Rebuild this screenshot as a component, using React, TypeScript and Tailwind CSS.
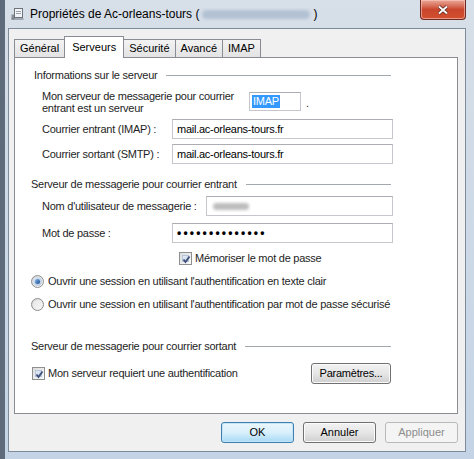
import React from "react";

const font = { fontFamily: '"Liberation Sans", Arial, sans-serif' };

function Check() {
  return (
    <div className="w-[13px] h-[13px] border border-[#8e8f8f] bg-gradient-to-br from-[#dcdcdc] to-[#fbfbfb] p-[2px] shrink-0">
      <div className="w-full h-full bg-gradient-to-br from-[#e6eef8] to-[#c5d4e6] border border-[#b5c4d6] relative">
        <svg width="11" height="11" viewBox="0 0 11 11" className="absolute left-[-2px] top-[-2px]">
          <path d="M2.5 5.5 L4.5 8 L8.5 2.5" stroke="#3d4f7a" strokeWidth="1.8" fill="none" />
        </svg>
      </div>
    </div>
  );
}

function Radio({ on }: { on?: boolean }) {
  return (
    <div className="w-[13px] h-[13px] rounded-full border border-[#8e8f8f] bg-gradient-to-br from-[#d4d4d4] to-[#f8f8f8] flex items-center justify-center shrink-0">
      <div className={"w-[9px] h-[9px] rounded-full flex items-center justify-center " + (on ? "bg-gradient-to-br from-[#d9e6f5] to-[#b5c8df]" : "bg-gradient-to-br from-[#e6e6e6] to-[#f6f6f6]")}>
        {on && <div className="w-[5px] h-[5px] rounded-full bg-gradient-to-br from-[#7fb4e8] to-[#1d4f94]" />}
      </div>
    </div>
  );
}

function Field({ w, children }: { w: string; children?: React.ReactNode }) {
  return (
    <div className={"h-[20px] border border-[#c5c7cc] border-t-[#abadb3] bg-white flex items-center pl-[4px] text-[11px] text-black " + w}>
      {children}
    </div>
  );
}

function Header({ text, pl }: { text: string; pl: string }) {
  return (
    <div className={"h-[14px] flex items-center text-[11px] text-[#1e1e1e] " + pl}>
      <span>{text}</span>
      <div className="flex-1 h-px bg-[#a3a8ad] ml-[9px] mr-[66px]" />
    </div>
  );
}

function Btn({ children, kind }: { children: React.ReactNode; kind?: "default" | "disabled" }) {
  const base = "h-[21px] w-[73px] rounded-[3px] flex items-center justify-center text-[11px] ";
  if (kind === "disabled")
    return <div className={base + "border border-[#b7babd] bg-[#f4f4f4] text-[#8d8d8d]"}>{children}</div>;
  if (kind === "default")
    return (
      <div className={base + "border border-[#3c7fb1] bg-gradient-to-b from-[#eaf6fd] via-[#d9f0fc] to-[#a7d9f5] text-black shadow-[inset_0_0_0_1px_#c6e4f5]"}>
        {children}
      </div>
    );
  return (
    <div className={base + "border border-[#707070] bg-gradient-to-b from-[#f2f2f2] via-[#e6e6e6] to-[#cfcfcf] text-black shadow-[inset_0_0_0_1px_#fbfbfb]"}>
      {children}
    </div>
  );
}

export default function App() {
  return (
    <div
      style={font}
      className="w-[474px] h-[459px] overflow-hidden flex flex-col bg-gradient-to-r from-[#5d6a7a] via-[#c3cfdc] to-[#b8cde4] relative"
    >
      <div className="absolute inset-0 bg-gradient-to-b from-[#d7dfe8] via-[#cdd9e6] to-[#c4d4e6] left-[5px] right-0" />
      {/* title bar */}
      <div className="relative h-[28px] flex items-center pl-[11px] shrink-0">
        <svg width="13" height="12" viewBox="0 0 13 12" className="mr-[6px]">
          <rect x="0.5" y="6.5" width="3" height="5" fill="#8a8f96" />
          <rect x="3.5" y="0.5" width="8" height="9" fill="#f2f4f6" stroke="#6d747c" />
          <rect x="5" y="3" width="5" height="1" fill="#9aa3ad" />
          <rect x="5" y="5" width="5" height="1" fill="#9aa3ad" />
          <rect x="0.5" y="10.5" width="12" height="1" fill="#6d747c" />
        </svg>
        <span className="text-[12px] text-black">Propriétés de Ac-orleans-tours (</span>
        <span className="w-[108px] h-[9px] mx-[3px] rounded-full bg-[#b3c2d3] blur-[1.5px]" />
        <span className="text-[12px] text-black">)</span>
        <div className="absolute right-[8px] top-0 w-[46px] h-[20px] rounded-b-[4px] border border-t-0 border-[#6b2a22] bg-gradient-to-b from-[#e9a99b] via-[#c9462c] to-[#d2502f] flex items-center justify-center shadow-[inset_0_0_0_1px_rgba(255,200,190,0.6)]">
          <svg width="12" height="10" viewBox="0 0 12 10">
            <path d="M2 1.5 L10 8.5 M10 1.5 L2 8.5" stroke="#4a1a14" strokeWidth="3.2" />
            <path d="M2 1.5 L10 8.5 M10 1.5 L2 8.5" stroke="#ffffff" strokeWidth="2" />
          </svg>
        </div>
      </div>

      {/* client */}
      <div className="relative ml-[8px] mr-[8px] h-[424px] border border-[#7d8b9a] bg-[#f0f0f0] flex flex-col pl-[5px] pr-[7px] shrink-0">
        {/* tabs */}
        <div className="flex items-end h-[28px] pt-[6px] text-[11px] text-black">
          <div className="h-[18px] px-[5px] border border-[#898c95] border-b-0 bg-gradient-to-b from-[#f3f3f3] to-[#e3e3e3] flex items-center">Général</div>
          <div className="h-[22px] px-[7px] border border-[#898c95] border-b-0 bg-white flex items-start pt-[2px] -mb-px relative z-10 -ml-px">Serveurs</div>
          <div className="h-[18px] px-[5px] border border-[#898c95] border-b-0 border-l-0 bg-gradient-to-b from-[#f3f3f3] to-[#e3e3e3] flex items-center">Sécurité</div>
          <div className="h-[18px] px-[5px] border border-[#898c95] border-b-0 border-l-0 bg-gradient-to-b from-[#f3f3f3] to-[#e3e3e3] flex items-center">Avancé</div>
          <div className="h-[18px] px-[5px] border border-[#898c95] border-b-0 border-l-0 bg-gradient-to-b from-[#f3f3f3] to-[#e3e3e3] flex items-center">IMAP</div>
        </div>
        {/* panel */}
        <div className="h-[357px] border border-[#898c95] bg-white flex flex-col text-[11px] text-[#1e1e1e] tracking-[-0.25px]">
          <div className="mt-[10px]">
            <Header text="Informations sur le serveur" pl="pl-[19px]" />
          </div>
          <div className="mt-[8px] flex items-start pl-[27px]">
            <div className="w-[207px] leading-[12px]">
              Mon serveur de messagerie pour courrier
              <br />
              entrant est un serveur
            </div>
            <div className="mt-[2px] h-[19px] w-[52px] border border-[#c5c7cc] border-t-[#abadb3] flex items-center pl-[2px]">
              <span className="bg-[#3399ff] text-white px-px leading-[13px]">IMAP</span>
            </div>
            <span className="ml-[5px] mt-[5px]">.</span>
          </div>
          <div className="mt-[5px] flex items-center pl-[27px]">
            <div className="w-[130px]">Courrier entrant (IMAP) :</div>
            <Field w="w-[221px]">mail.ac-orleans-tours.fr</Field>
          </div>
          <div className="mt-[5px] flex items-center pl-[27px]">
            <div className="w-[130px]">Courrier sortant (SMTP) :</div>
            <Field w="w-[221px]">mail.ac-orleans-tours.fr</Field>
          </div>
          <div className="mt-[13px]">
            <Header text="Serveur de messagerie pour courrier entrant" pl="pl-[16px]" />
          </div>
          <div className="mt-[5px] flex items-center pl-[27px]">
            <div className="w-[164px]">Nom d'utilisateur de messagerie :</div>
            <Field w="w-[187px]">
              <span className="w-[36px] h-[7px] ml-[2px] rounded-full bg-[#bdbdbd] blur-[1.5px]" />
            </Field>
          </div>
          <div className="mt-[7px] flex items-center pl-[27px]">
            <div className="w-[130px]">Mot de passe :</div>
            <Field w="w-[221px]">
              <span className="text-[12px] tracking-[2.2px] font-bold">••••••••••••••</span>
            </Field>
          </div>
          <div className="mt-[8px] h-[14px] flex items-center pl-[164px] gap-[3px]">
            <Check />
            <span>Mémoriser le mot de passe</span>
          </div>
          <div className="mt-[9px] h-[14px] flex items-center pl-[16px] gap-[4px]">
            <Radio on />
            <span>Ouvrir une session en utilisant l'authentification en texte clair</span>
          </div>
          <div className="mt-[9px] h-[14px] flex items-center pl-[16px] gap-[4px]">
            <Radio />
            <span>Ouvrir une session en utilisant l'authentification par mot de passe sécurisé</span>
          </div>
          <div className="mt-[28px]">
            <Header text="Serveur de messagerie pour courrier sortant" pl="pl-[16px]" />
          </div>
          <div className="mt-[10px] flex items-center pl-[17px] pr-[66px]">
            <Check />
            <span className="ml-[3px] flex-1">Mon serveur requiert une authentification</span>
            <div className="h-[21px] w-[80px] rounded-[3px] flex items-center justify-center border border-[#707070] bg-gradient-to-b from-[#f2f2f2] via-[#e6e6e6] to-[#cfcfcf] text-black shadow-[inset_0_0_0_1px_#fbfbfb]">
              Paramètres...
            </div>
          </div>
        </div>
        {/* buttons */}
        <div className="mt-[8px] flex justify-end gap-[9px]">
          <Btn kind="default">OK</Btn>
          <Btn>Annuler</Btn>
          <Btn kind="disabled">Appliquer</Btn>
        </div>
      </div>
    </div>
  );
}
